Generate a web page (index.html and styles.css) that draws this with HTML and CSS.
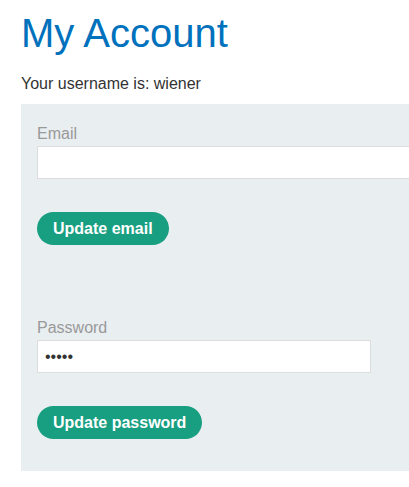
FILE: index.html
```html
<!DOCTYPE html>
<html lang="en">
<head>
<meta charset="utf-8">
<title>My Account</title>
<link rel="stylesheet" href="styles.css">
</head>
<body>
<div class="page">
  <h1 class="title">My Account</h1>
  <p class="username">Your username is: wiener</p>
  <div class="panel">
    <form class="account-form">
      <label class="field-label" for="email">Email</label>
      <input class="field-input field-wide" id="email" type="email" name="email">
      <button class="btn" type="button">Update email</button>
    </form>
    <form class="account-form second">
      <label class="field-label" for="password">Password</label>
      <input class="field-input" id="password" type="password" name="password" value="peter">
      <button class="btn" type="button">Update password</button>
    </form>
  </div>
</div>
</body>
</html>
```
FILE: styles.css
```css
html, body {
  margin: 0;
  padding: 0;
  background: #ffffff;
}
body {
  font-family: "Liberation Sans", Arial, sans-serif;
  color: #333333;
}
.page {
  width: 100%;
  height: 487px;
  overflow: hidden;
  padding-left: 21px;
  box-sizing: border-box;
}
.title {
  margin: 10px 0 0;
  font-size: 40px;
  line-height: 46px;
  font-weight: normal;
  color: #0071bc;
  white-space: nowrap;
}
.username {
  margin: 18px 0 0;
  font-size: 16px;
  line-height: 19px;
}
.panel {
  margin-top: 11px;
  width: 620px;
  background: #e9eef1;
  padding: 20px 16px 32px;
  box-sizing: border-box;
}
.account-form {
  display: flex;
  flex-direction: column;
  align-items: flex-start;
}
.account-form.second {
  margin-top: 73px;
}
.field-label {
  font-size: 16px;
  line-height: 19px;
  color: #999999;
}
.field-input {
  margin-top: 3px;
  width: 334px;
  height: 33px;
  box-sizing: border-box;
  border: 1px solid #dddddd;
  background: #ffffff;
  padding: 0 7px;
  font-family: "Liberation Sans", Arial, sans-serif;
  font-size: 16px;
  color: #333333;
  outline: none;
}
.field-wide {
  width: 560px;
}
.btn {
  margin-top: 33px;
  height: 33px;
  padding: 0 16px;
  border: none;
  border-radius: 17px;
  background: #189e80;
  color: #ffffff;
  font-family: "Liberation Sans", Arial, sans-serif;
  font-size: 16px;
  font-weight: bold;
  cursor: pointer;
}
```
